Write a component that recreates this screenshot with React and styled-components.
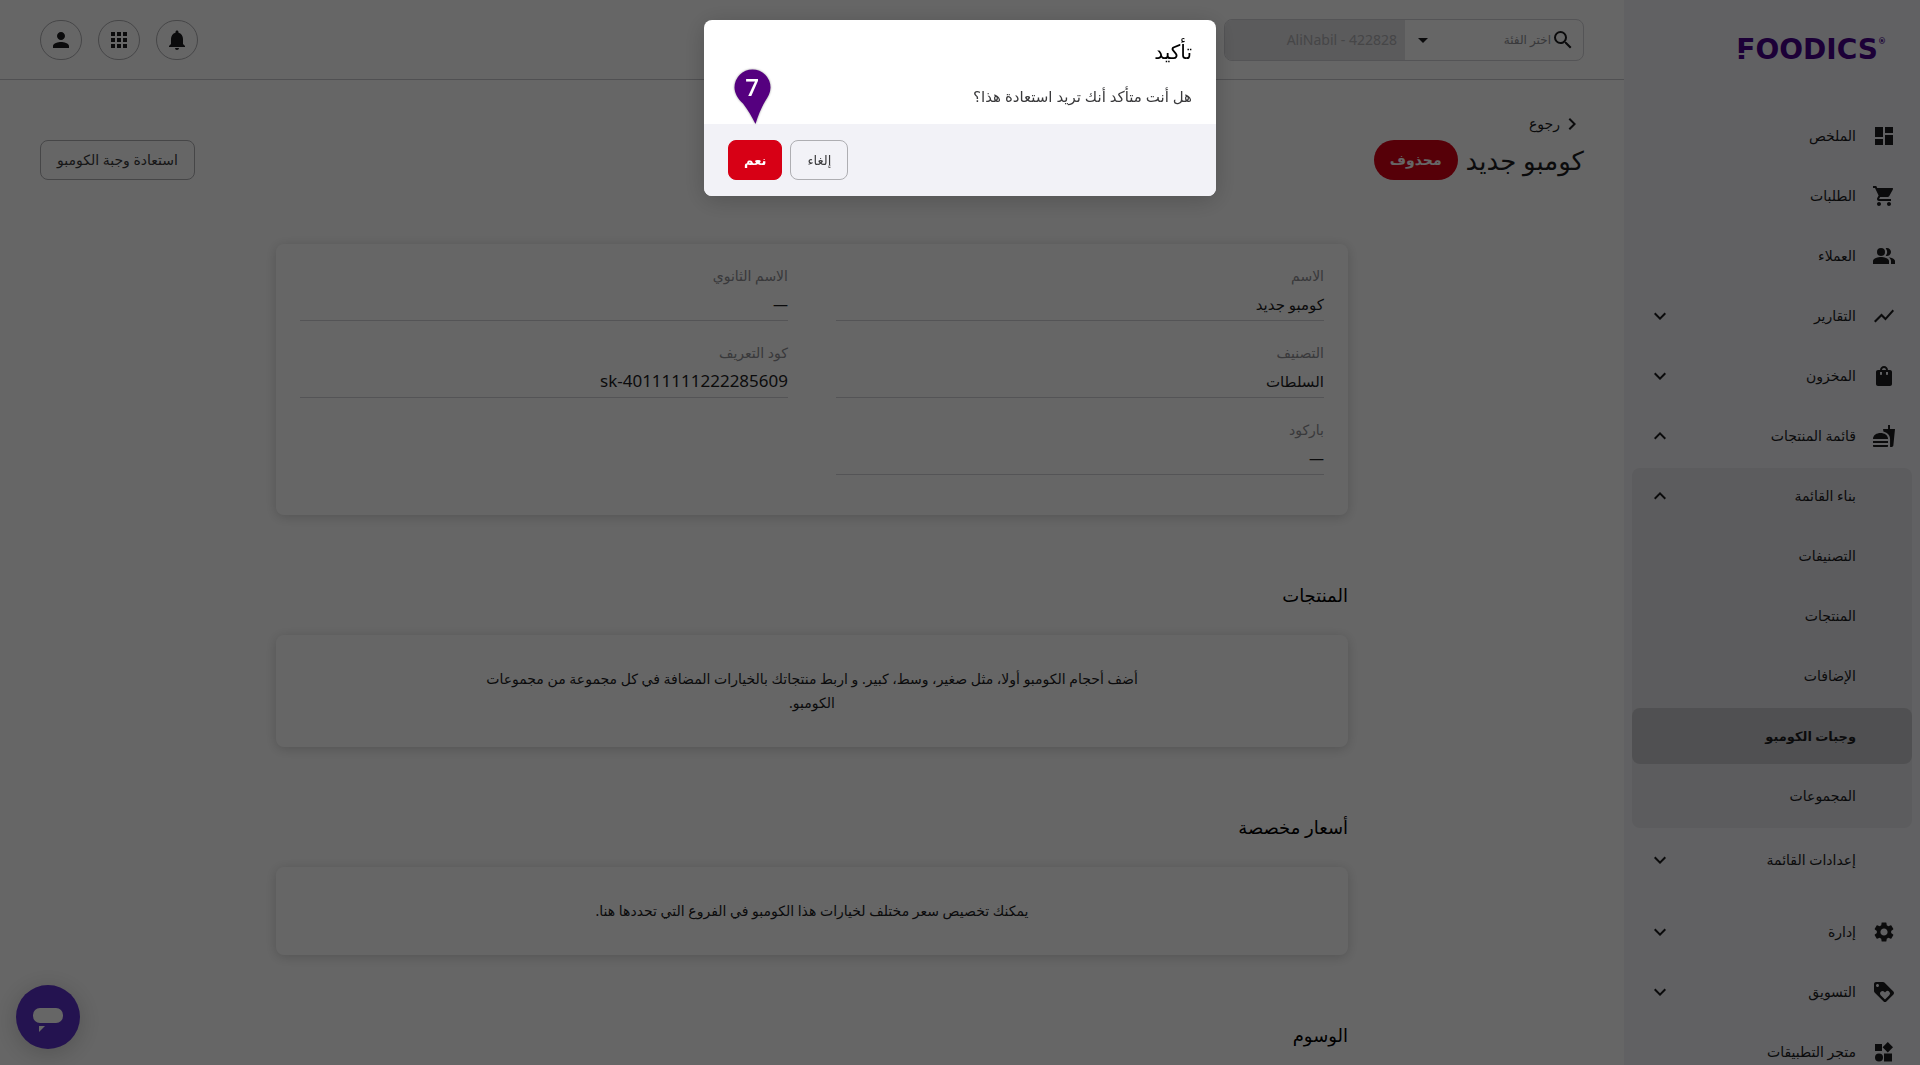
import React, { useState } from 'react';
import styled, { createGlobalStyle } from 'styled-components';
import {
  MdApps,
  MdArrowDropDown,
  MdChevronRight,
  MdDashboard,
  MdExpandLess,
  MdExpandMore,
  MdFastfood,
  MdLoyalty,
  MdNotifications,
  MdPeopleAlt,
  MdPerson,
  MdSearch,
  MdSettings,
  MdShoppingBag,
  MdShoppingCart,
  MdShowChart,
} from 'react-icons/md';

const GlobalStyle = createGlobalStyle`
  * {
    box-sizing: border-box;
  }

  body {
    margin: 0;
    overflow: hidden;
    background: #fff;
    color: #1c1c1e;
    font-family: "Noto Sans", "DejaVu Sans", sans-serif;
    font-size: 14px;
    line-height: 24px;
  }

  button,
  input,
  select {
    font: inherit;
    color: inherit;
  }
`;

const Page = styled.div`
  display: flex;
  height: 100vh;
  overflow: hidden;
`;

const Sidebar = styled.aside`
  flex: none;
  width: 296px;
  padding: 0 8px;
  background: #f2f2f7;
`;

const Logo = styled.a`
  display: flex;
  align-items: flex-start;
  justify-content: flex-end;
  height: 108px;
  padding: 34px 26px 0 0;
  color: #46008b;
  direction: ltr;
  font-family: "DejaVu Sans", sans-serif;
  font-size: 28px;
  font-weight: 700;
  line-height: 32px;
  text-decoration: none;

  sup {
    font-size: 8px;
    line-height: 16px;
  }
`;

const LogoInitial = styled.span`
  position: relative;

  &::after {
    content: '';
    position: absolute;
    left: 0;
    bottom: 11px;
    width: 12px;
    height: 2px;
    background: #f2f2f7;
  }
`;

const NavItem = styled.a`
  display: flex;
  align-items: center;
  gap: 16px;
  height: 56px;
  margin-bottom: 4px;
  padding: 0 16px;
  border-radius: 8px;
  background: ${props => props.$active ? '#c8c8cc' : 'transparent'};
  color: #1c1c1e;
  font-size: ${props => props.$active ? '13px' : '14px'};
  font-weight: ${props => props.$active ? 700 : 400};
  text-decoration: none;

  svg {
    flex: none;
  }
`;

const NavIcon = styled.span`
  display: flex;
  width: 24px;
  height: 24px;
`;

const NavLabel = styled.span`
  flex: 1;
`;

const NavGroup = styled.div`
  margin-bottom: ${props => props.$last ? '12px' : '4px'};
  border-radius: 8px;
  background: ${props => props.$open ? '#e5e5ea' : 'transparent'};
  overflow: hidden;
`;

const Main = styled.main`
  flex: 1;
  min-width: 0;
`;

const TopBar = styled.header`
  display: flex;
  align-items: center;
  justify-content: space-between;
  height: 80px;
  padding: 0 40px;
  border-bottom: 1px solid #c7c7cc;
`;

const SearchBox = styled.div`
  display: flex;
  width: 360px;
  height: 42px;
  border: 1px solid #d1d1d6;
  border-radius: 8px;
  overflow: hidden;
`;

const SearchKind = styled.div`
  display: flex;
  flex: 1;
  min-width: 0;
  align-items: center;
  padding: 0 8px 0 6px;
`;

const KindSelect = styled.select`
  flex: 1;
  min-width: 0;
  padding: 0;
  border: 0;
  appearance: none;
  background: transparent;
  color: #8e8e93;
  font-size: 12px;
`;

const SearchInput = styled.input`
  flex: 1;
  min-width: 0;
  padding: 0 8px;
  border: 0;
  background: #e3e3e6;
  color: #aeaeb2;
`;

const Actions = styled.div`
  display: flex;
  flex-direction: row-reverse;
  gap: 16px;
`;

const RoundButton = styled.button`
  display: flex;
  align-items: center;
  justify-content: center;
  width: 42px;
  height: 40px;
  padding: 0;
  border: 1px solid #aeaeb2;
  border-radius: 20px;
  background: #fff;
`;

const PageHead = styled.div`
  display: flex;
  align-items: flex-end;
  justify-content: space-between;
  padding: 32px 40px 64px;
`;

const BackLink = styled.a`
  display: flex;
  align-items: center;
  height: 28px;
  padding-bottom: 4px;
  color: #1c1c1e;
  text-decoration: none;
`;

const TitleRow = styled.div`
  display: flex;
  align-items: center;
  gap: 8px;
`;

const Title = styled.h1`
  margin: 0;
  font-size: 26px;
  font-weight: 400;
  line-height: 40px;
`;

const Badge = styled.span`
  padding: 0 16px;
  border-radius: 20px;
  background: #d70015;
  color: #fff;
  font-weight: 700;
  line-height: 40px;
`;

const Button = styled.button`
  height: 40px;
  padding: 0 ${props => props.$danger ? '15px' : '16px'};
  border: 1px solid ${props => props.$danger ? '#d70015' : '#aeaeb2'};
  border-radius: 8px;
  background: ${props => props.$danger ? '#d70015' : 'transparent'};
  color: ${props => props.$danger ? '#fff' : '#3a3a3c'};
  font-size: ${props => props.$small ? '13px' : '14px'};
  font-weight: ${props => props.$danger ? 600 : 400};
`;

const Content = styled.div`
  max-width: 1072px;
  margin: 0 auto;
`;

const Card = styled.section`
  border-radius: 8px;
  background: #fff;
  box-shadow: 0 2px 12px rgba(0, 0, 0, 0.18);
`;

const Fields = styled.dl`
  display: grid;
  grid-template-columns: 1fr 1fr;
  gap: 20px 48px;
  margin: 0;
  padding: 20px 24px 40px;
`;

const Field = styled.div`
  border-bottom: 1px solid #d1d1d6;
`;

const FieldLabel = styled.dt`
  color: #8e8e93;
  line-height: 24px;
`;

const FieldValue = styled.dd`
  margin: 0;
  font-size: ${props => props.$latin ? '17px' : '15px'};
  line-height: 32px;
`;

const SectionTitle = styled.h2`
  margin: 64px 0 24px;
  color: #000;
  font-size: 18px;
  font-weight: 400;
  line-height: 32px;
`;

const EmptyText = styled.p`
  max-width: 736px;
  margin: 0 auto;
  padding: 32px 24px;
  text-align: center;
`;

const ChatButton = styled.button`
  position: fixed;
  left: 16px;
  bottom: 16px;
  width: 64px;
  height: 64px;
  padding: 0;
  border: 0;
  border-radius: 50%;
  background: #5b30c8;
  box-shadow: 0 4px 24px rgba(0, 0, 0, 0.2);
`;

const Overlay = styled.div`
  position: fixed;
  inset: 0;
  z-index: 10;
  padding: 20px;
  background: rgba(0, 0, 0, 0.6);
`;

const Dialog = styled.div`
  position: relative;
  max-width: 512px;
  margin: 0 auto;
  border-radius: 8px;
  background: #fff;
  box-shadow: 0 4px 24px rgba(0, 0, 0, 0.2);
`;

const DialogBody = styled.div`
  padding: 16px 24px;
  color: #3a3a3c;
`;

const DialogTitle = styled.h3`
  margin: 0 0 16px;
  color: #000;
  font-size: 20px;
  font-weight: 400;
  line-height: 32px;
`;

const DialogText = styled.p`
  margin: 0;
  font-size: 15px;
  line-height: 24px;
`;

const DialogFooter = styled.div`
  display: flex;
  justify-content: flex-end;
  gap: 8px;
  padding: 16px 24px;
  border-radius: 0 0 8px 8px;
  background: #f2f2f7;
`;

const StepPin = styled.svg`
  position: absolute;
  left: 30px;
  top: 49px;
  filter: drop-shadow(0 0 1px rgba(0, 0, 0, 0.4));
`;

function AppsStoreIcon() {
  return (
    <svg width="24" height="24" viewBox="0 0 24 24" fill="currentColor">
      <path d="M3 4h7v7H3zM12 13.5h8v8h-8zM15.8 2l5.2 5.2-5.2 5.2-5.2-5.2z" />
      <circle cx="7" cy="17.5" r="4" />
    </svg>
  );
}

const MAIN_NAV = [
  { label: 'الملخص', icon: <MdDashboard size={24} /> },
  { label: 'الطلبات', icon: <MdShoppingCart size={24} /> },
  { label: 'العملاء', icon: <MdPeopleAlt size={24} /> },
  { label: 'التقارير', icon: <MdShowChart size={24} />, arrow: 'down' },
  { label: 'المخزون', icon: <MdShoppingBag size={24} />, arrow: 'down' },
  { label: 'قائمة المنتجات', icon: <MdFastfood size={24} />, arrow: 'up' },
];

const MENU_NAV = [
  { label: 'بناء القائمة', arrow: 'up' },
  { label: 'التصنيفات' },
  { label: 'المنتجات' },
  { label: 'الإضافات' },
  { label: 'وجبات الكومبو', active: true },
  { label: 'المجموعات' },
];

const SETTINGS_NAV = [{ label: 'إعدادات القائمة', arrow: 'down' }];

const BOTTOM_NAV = [
  { label: 'إدارة', icon: <MdSettings size={24} />, arrow: 'down' },
  { label: 'التسويق', icon: <MdLoyalty size={24} />, arrow: 'down' },
  { label: 'متجر التطبيقات', icon: <AppsStoreIcon /> },
];

const FIELDS = [
  { label: 'الاسم', value: 'كومبو جديد' },
  { label: 'الاسم الثانوي', value: '—' },
  { label: 'التصنيف', value: 'السلطات' },
  { label: 'كود التعريف', value: 'sk-40111111222285609', latin: true },
  { label: 'باركود', value: '—' },
];

function NavList({ items }) {
  return items.map(item => (
    <NavItem key={item.label} href="#" $active={item.active}>
      <NavIcon>{item.icon}</NavIcon>
      <NavLabel>{item.label}</NavLabel>
      {item.arrow === 'down' && <MdExpandMore size={24} />}
      {item.arrow === 'up' && <MdExpandLess size={24} />}
    </NavItem>
  ));
}

function ConfirmDialog({ onClose }) {
  return (
    <Overlay onClick={onClose}>
      <Dialog role="dialog" aria-labelledby="confirm-title" onClick={e => e.stopPropagation()}>
        <DialogBody>
          <DialogTitle id="confirm-title">تأكيد</DialogTitle>
          <DialogText>هل أنت متأكد أنك تريد استعادة هذا؟</DialogText>
        </DialogBody>
        <DialogFooter>
          <Button type="button" $small onClick={onClose}>إلغاء</Button>
          <Button type="button" $small $danger onClick={onClose}>نعم</Button>
        </DialogFooter>
        <StepPin width="38" height="56" viewBox="0 0 38 56">
          <path d="M18.500 .5A18 18 0 0 1 36.500 18.500c0 5-2.500 9.500-5.500 14C27 39 24 47 21.500 55 18 48 14 41 9 34.500 4 30 .5 24 .5 18.500A18 18 0 0 1 18.500 .5z" fill="#55007f" />
          <text x="18" y="27" textAnchor="middle" fill="#fff" fontSize="24" fontWeight="600" fontFamily="Open Sans, sans-serif">7</text>
        </StepPin>
      </Dialog>
    </Overlay>
  );
}

function App() {
  const [confirming, setConfirming] = useState(true);

  return (
    <>
      <GlobalStyle />
      <Page dir="rtl" lang="ar">
        <Sidebar>
          <Logo href="#">
            <LogoInitial>F</LogoInitial>OODICS<sup>®</sup>
          </Logo>
          <nav>
            <NavList items={MAIN_NAV} />
            <NavGroup $open>
              <NavList items={MENU_NAV} />
            </NavGroup>
            <NavGroup $last>
              <NavList items={SETTINGS_NAV} />
            </NavGroup>
            <NavList items={BOTTOM_NAV} />
          </nav>
        </Sidebar>

        <Main>
          <TopBar>
            <SearchBox>
              <SearchKind>
                <MdSearch size={24} />
                <KindSelect aria-label="اختر الفئة">
                  <option>اختر الفئة</option>
                </KindSelect>
                <MdArrowDropDown size={24} />
              </SearchKind>
              <SearchInput aria-label="AliNabil - 422828" defaultValue="AliNabil - 422828" disabled />
            </SearchBox>
            <Actions>
              <RoundButton type="button"><MdPerson size={24} /></RoundButton>
              <RoundButton type="button"><MdApps size={24} /></RoundButton>
              <RoundButton type="button"><MdNotifications size={24} /></RoundButton>
            </Actions>
          </TopBar>

          <PageHead>
            <div>
              <BackLink href="#"><MdChevronRight size={24} />رجوع</BackLink>
              <TitleRow>
                <Title>كومبو جديد</Title>
                <Badge>محذوف</Badge>
              </TitleRow>
            </div>
            <Button type="button" onClick={() => setConfirming(true)}>استعادة وجبة الكومبو</Button>
          </PageHead>

          <Content>
            <Card>
              <Fields>
                {FIELDS.map(field => (
                  <Field key={field.label}>
                    <FieldLabel>{field.label}</FieldLabel>
                    <FieldValue $latin={field.latin}>{field.value}</FieldValue>
                  </Field>
                ))}
              </Fields>
            </Card>

            <SectionTitle>المنتجات</SectionTitle>
            <Card>
              <EmptyText>
                أضف أحجام الكومبو أولا، مثل صغير، وسط، كبير. و اربط منتجاتك بالخيارات المضافة في كل مجموعة من مجموعات الكومبو.
              </EmptyText>
            </Card>

            <SectionTitle>أسعار مخصصة</SectionTitle>
            <Card>
              <EmptyText>يمكنك تخصيص سعر مختلف لخيارات هذا الكومبو في الفروع التي تحددها هنا.</EmptyText>
            </Card>

            <SectionTitle>الوسوم</SectionTitle>
          </Content>
        </Main>

        <ChatButton type="button" aria-label="الدردشة">
          <svg width="64" height="64" viewBox="0 0 64 64" fill="#fff">
            <rect x="17" y="23" width="30" height="15" rx="7" />
            <path d="M23 41h6l-6 6z" />
          </svg>
        </ChatButton>
        {confirming && <ConfirmDialog onClose={() => setConfirming(false)} />}
      </Page>
    </>
  );
}

export default App;
